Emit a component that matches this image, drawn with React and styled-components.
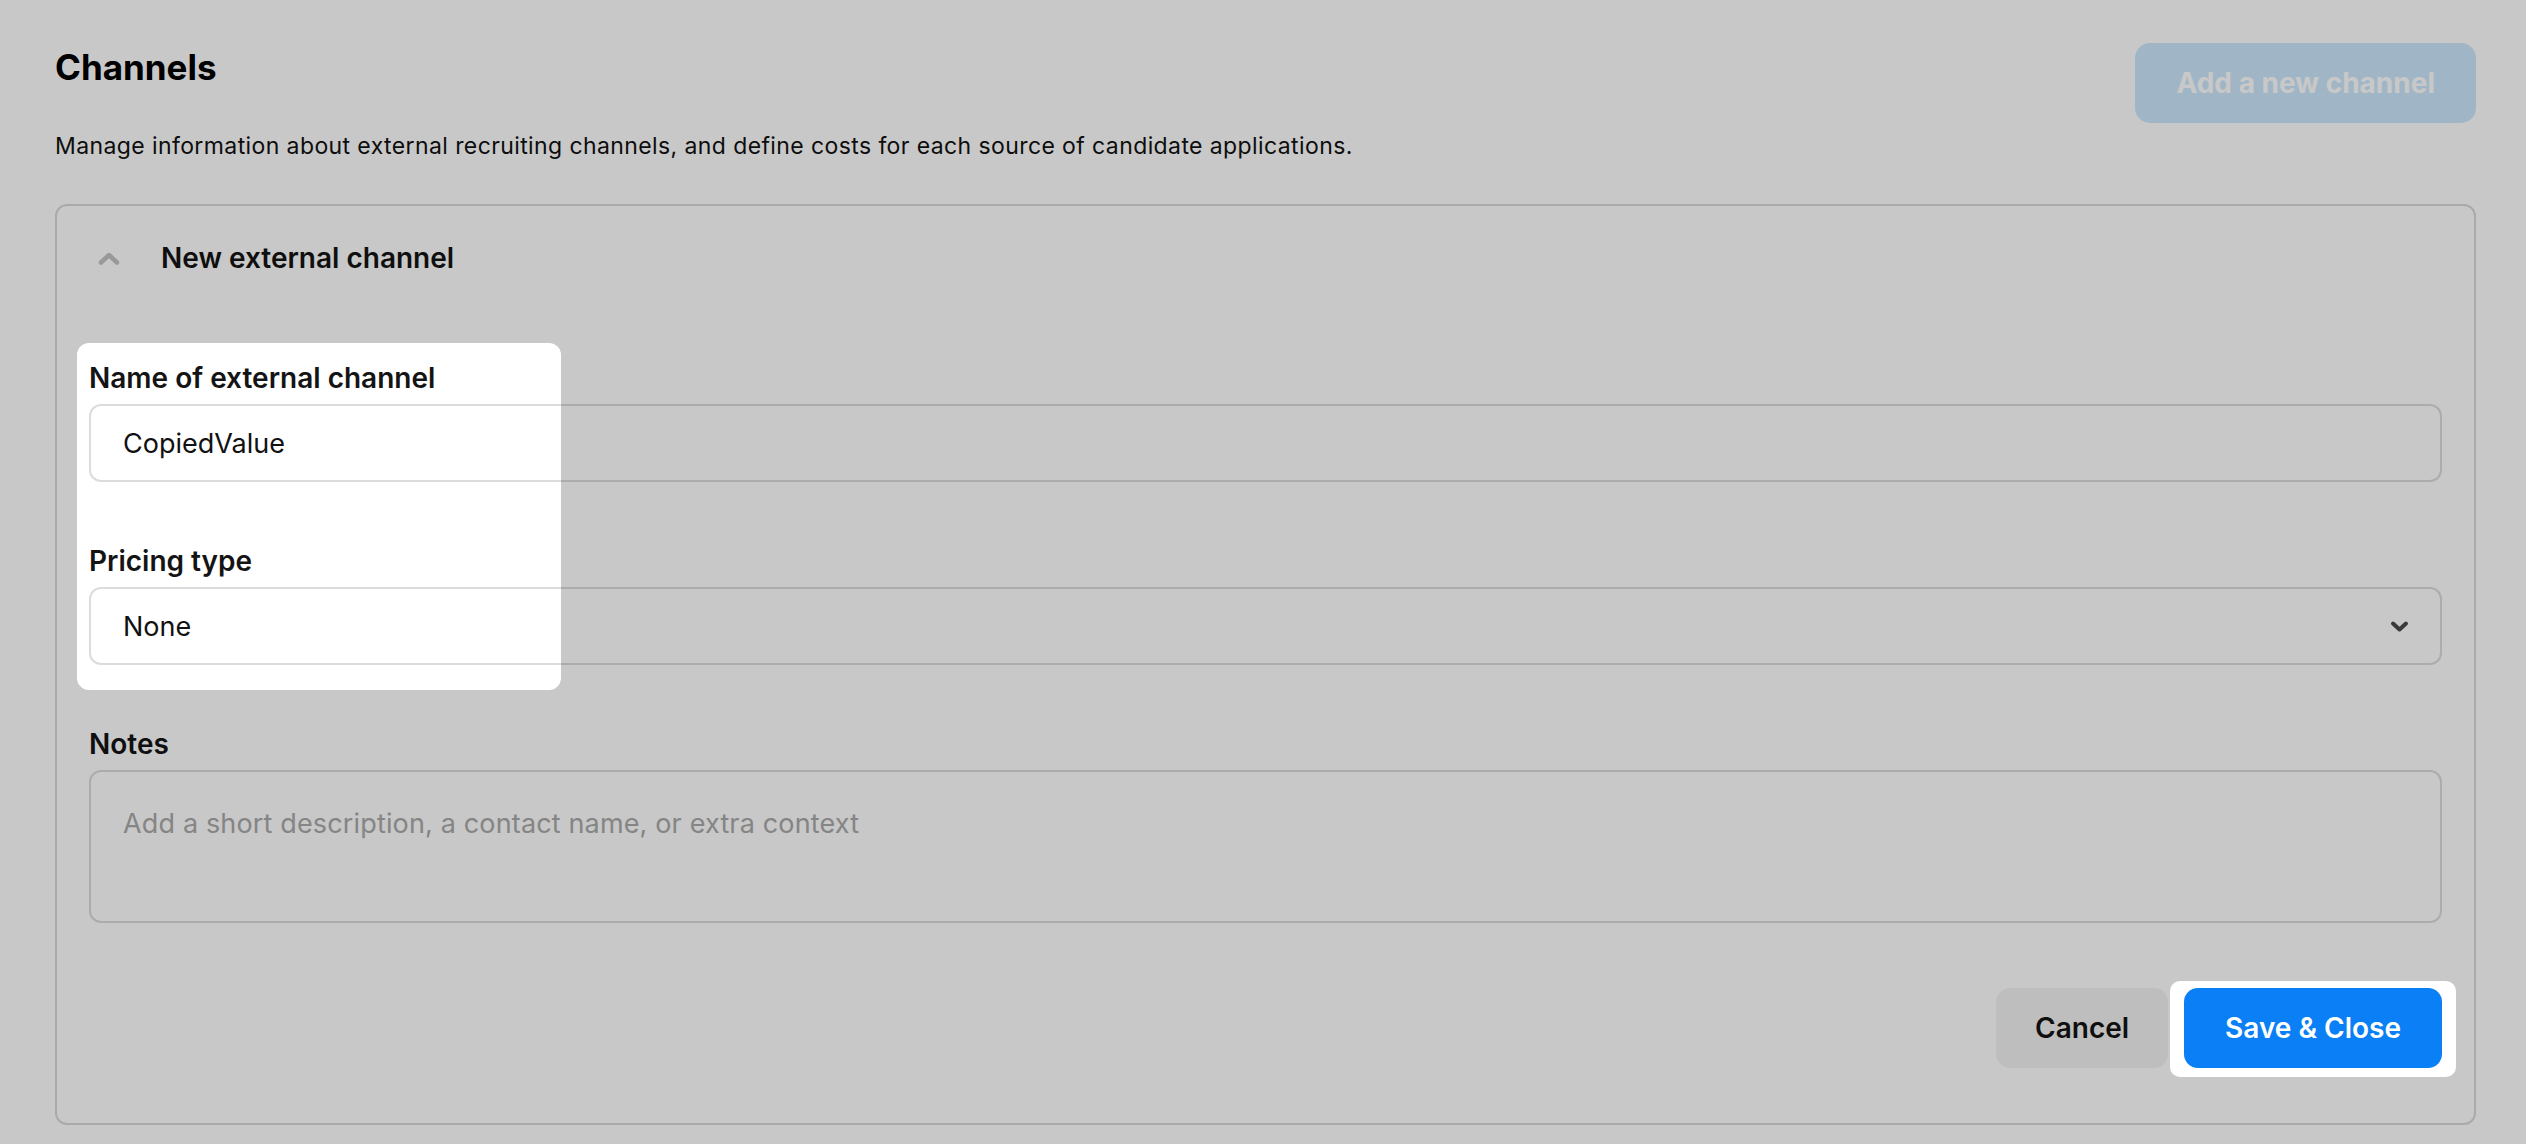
import React from 'react';
import styled, { createGlobalStyle } from 'styled-components';

const GlobalStyle = createGlobalStyle`
  html, body {
    margin: 0;
    padding: 0;
    background: #fff;
  }
  body {
    font-family: Inter, "Noto Sans", sans-serif;
    color: #111;
    -webkit-font-smoothing: antialiased;
  }
  * {
    box-sizing: border-box;
  }
`;

// spots of the page that the tour leaves undimmed
const SPOTLIGHTS = [
  { x: 77, y: 343, w: 484, h: 347, r: 12 },
  { x: 2170, y: 981, w: 286, h: 96, r: 10 },
];

const roundRect = ({ x, y, w, h, r }) =>
  `M${x + r} ${y}H${x + w - r}A${r} ${r} 0 0 1 ${x + w} ${y + r}V${y + h - r}` +
  `A${r} ${r} 0 0 1 ${x + w - r} ${y + h}H${x + r}A${r} ${r} 0 0 1 ${x} ${y + h - r}` +
  `V${y + r}A${r} ${r} 0 0 1 ${x + r} ${y}Z`;

const ChevronUp = () => (
  <svg width="22" height="13" viewBox="0 0 22 13" fill="none">
    <polyline
      points="3,10.5 11,3 19,10.5"
      stroke="currentColor"
      strokeWidth="4.5"
      strokeLinecap="round"
      strokeLinejoin="round"
    />
  </svg>
);

const ChevronDown = () => (
  <svg width="19" height="13" viewBox="0 0 19 13" fill="none">
    <polyline
      points="3,3.5 9.5,9.5 16,3.5"
      stroke="currentColor"
      strokeWidth="4"
      strokeLinecap="round"
      strokeLinejoin="round"
    />
  </svg>
);

const App = () => {
  return (
    <>
      <GlobalStyle />
      <Page>
        <Header>
          <TitleBlock>
            <Title>Channels</Title>
            <Description>
              Manage information about external recruiting channels, and define costs for each
              source of candidate applications.
            </Description>
          </TitleBlock>
          <AddButton disabled>Add a new channel</AddButton>
        </Header>

        <Card>
          <CardHeader>
            <Toggle>
              <ChevronUp />
            </Toggle>
            <CardTitle>New external channel</CardTitle>
          </CardHeader>

          <Form>
            <Field>
              <Label>Name of external channel</Label>
              <TextInput defaultValue="CopiedValue" />
            </Field>
            <Field>
              <Label>Pricing type</Label>
              <SelectBox>
                <span>None</span>
                <SelectIcon>
                  <ChevronDown />
                </SelectIcon>
              </SelectBox>
            </Field>
            <Field>
              <Label>Notes</Label>
              <TextArea placeholder="Add a short description, a contact name, or extra context" />
            </Field>
          </Form>

          <Actions>
            <Button>Cancel</Button>
            <Button $primary>Save &amp; Close</Button>
          </Actions>
        </Card>
      </Page>

      <Overlay>
        <svg width="100%" height="100%">
          <path
            fillRule="evenodd"
            fill="rgba(0, 0, 0, 0.216)"
            d={`M-10 -10H10000V10000H-10Z${SPOTLIGHTS.map(roundRect).join('')}`}
          />
        </svg>
      </Overlay>
    </>
  );
};

export default App;

const Page = styled.div`
  height: 100vh;
  overflow: hidden;
  padding: 43px 50px 0 55px;
`;

const Header = styled.div`
  display: flex;
  justify-content: space-between;
  align-items: flex-start;
`;

const TitleBlock = styled.div`
  padding-top: 4px;
`;

const Title = styled.h1`
  margin: 0;
  font-size: 35px;
  line-height: 40px;
  font-weight: 700;
  color: #000;
`;

const Description = styled.p`
  margin: 44px 0 0;
  font-size: 23px;
  line-height: 30px;
  letter-spacing: 0.4px;
  color: #111;
`;

const AddButton = styled.button`
  height: 80px;
  padding: 0 41px;
  border: none;
  border-radius: 15px;
  background: #cde9fe;
  color: #fff;
  font-family: inherit;
  font-size: 28px;
  font-weight: 700;
`;

const Card = styled.section`
  margin-top: 43px;
  border: 2px solid #d9d9d9;
  border-radius: 12px;
  padding: 34px 32px 55px;
`;

const CardHeader = styled.div`
  display: flex;
  align-items: center;
  gap: 32px;
  height: 36px;
  margin-bottom: 84px;
`;

const Toggle = styled.div`
  width: 40px;
  height: 40px;
  display: flex;
  align-items: center;
  justify-content: center;
  color: #c3c3c3;
`;

const CardTitle = styled.h2`
  margin: 0;
  font-size: 28px;
  line-height: 36px;
  font-weight: 600;
  color: #141414;
`;

const Form = styled.div`
  display: flex;
  flex-direction: column;
  gap: 61px;
`;

const Field = styled.div`
  display: flex;
  flex-direction: column;
  gap: 8px;
`;

const Label = styled.label`
  font-size: 28px;
  line-height: 36px;
  font-weight: 600;
  color: #141414;
`;

const TextInput = styled.input`
  height: 78px;
  padding: 0 32px;
  border: 2px solid #dcdcdc;
  border-radius: 12px;
  font-family: inherit;
  font-size: 27px;
  color: #111;
  background: #fff;
  outline: none;
`;

const SelectBox = styled.div`
  display: flex;
  align-items: center;
  justify-content: space-between;
  height: 78px;
  padding: 0 31px 0 32px;
  border: 2px solid #dcdcdc;
  border-radius: 12px;
  font-size: 27px;
  color: #111;
`;

const SelectIcon = styled.span`
  display: flex;
  color: #4a4a4a;
`;

const TextArea = styled.textarea`
  height: 153px;
  padding: 34px 32px;
  border: 2px solid #dcdcdc;
  border-radius: 12px;
  font-family: inherit;
  font-size: 27px;
  line-height: 36px;
  letter-spacing: 0.15px;
  color: #111;
  resize: none;
  outline: none;

  &::placeholder {
    color: #aaaaaa;
  }
`;

const Actions = styled.div`
  display: flex;
  justify-content: flex-end;
  gap: 16px;
  margin-top: 65px;
`;

const Button = styled.button`
  height: 80px;
  padding: 0 ${(p) => (p.$primary ? '41px' : '39px')};
  border: none;
  border-radius: 14px;
  background: ${(p) => (p.$primary ? '#0a7ff6' : '#f3f3f3')};
  color: ${(p) => (p.$primary ? '#fff' : '#141414')};
  font-family: inherit;
  font-size: 28px;
  font-weight: 600;
`;

const Overlay = styled.div`
  position: fixed;
  inset: 0;
  z-index: 10;
  pointer-events: none;

  svg {
    display: block;
  }
`;
